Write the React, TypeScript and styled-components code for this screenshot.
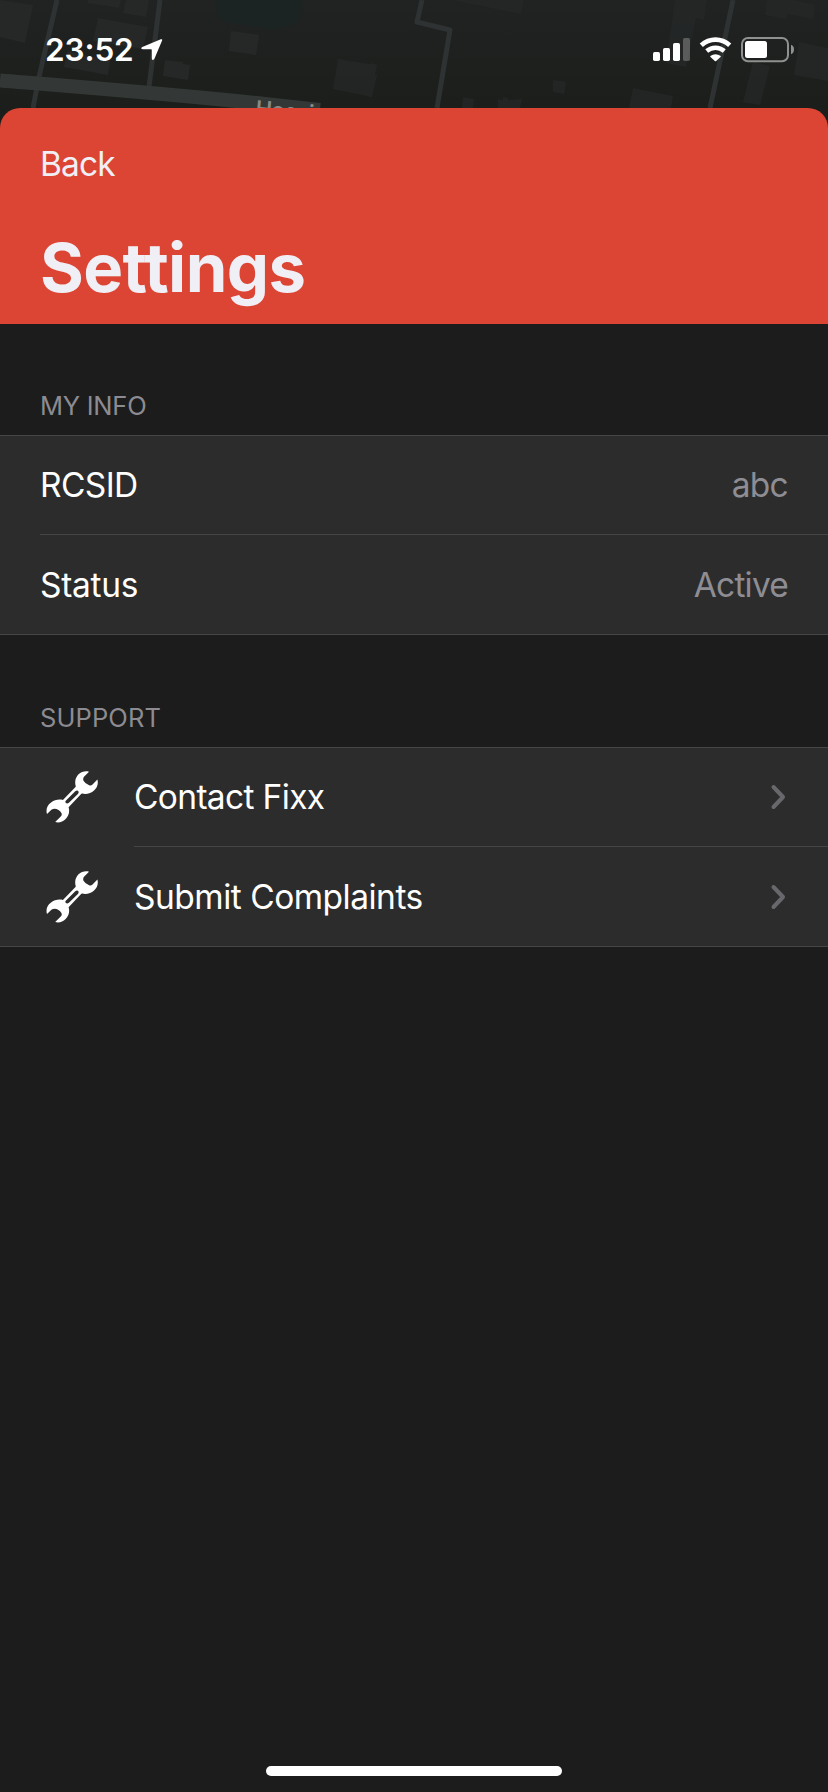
import React from "react";
import styled, { createGlobalStyle } from "styled-components";

const GlobalStyle = createGlobalStyle`
  * { box-sizing: border-box; }
  body {
    margin: 0;
    background: #1c1c1c;
    font-family: Inter, "Liberation Sans", sans-serif;
    color: #fff;
  }
`;

const Screen = styled.div`
  display: flex;
  flex-direction: column;
  width: 828px;
  height: 1792px;
  overflow: hidden;
  background: #1c1c1c;
`;

const StatusBar = styled.header`
  position: relative;
  display: flex;
  justify-content: space-between;
  height: 108px;
  padding: 37px 34px 0 45px;
  background: linear-gradient(#212323, #1b1e1a);
`;

const MapBackdrop = styled.svg`
  position: absolute;
  top: 0;
  left: 0;
`;

const StatusGroup = styled.div`
  position: relative;
  display: flex;
  align-items: flex-start;
  height: 26px;
`;

const Time = styled.span`
  width: 96px;
  font-size: 31.5px;
  font-weight: 600;
  line-height: 25px;
  letter-spacing: -0.1px;
  white-space: nowrap;
`;

const Sheet = styled.main`
  display: flex;
  flex: 1;
  flex-direction: column;
  background: #1c1c1c;
`;

const NavBar = styled.div`
  display: flex;
  flex-direction: column;
  height: 216px;
  padding: 36px 40px 0;
  border-radius: 20px 20px 0 0;
  background: #dc4433;
  color: #f0eff5;
`;

const SheetTop = styled.div`
  background: #1b1e1a;
`;

const BackButton = styled.button`
  align-self: flex-start;
  padding: 0;
  border: 0;
  background: none;
  color: inherit;
  font: 400 33.5px/41px Inter, "Liberation Sans", sans-serif;
  letter-spacing: -0.9px;
`;

const Title = styled.h1`
  margin: 43px 0 0;
  font-size: 67px;
  font-weight: 700;
  line-height: 80px;
  letter-spacing: -0.6px;
`;

const SectionLabel = styled.h2<{ $top: number; $spacing: number }>`
  margin: 0;
  padding: ${(p) => p.$top}px 40px 13px;
  color: #8c8b91;
  font-size: 25.5px;
  font-weight: 400;
  line-height: 32px;
  letter-spacing: ${(p) => p.$spacing}px;
`;

const List = styled.div`
  height: 200px;
  border-top: 1px solid #464648;
  border-bottom: 1px solid #464648;
  background: #2c2c2c;
`;

const Row = styled.div<{ $divider?: boolean }>`
  display: flex;
  align-items: stretch;
  height: ${(p) => (p.$divider ? 99 : 100)}px;
  padding-left: 40px;
`;

const IconSlot = styled.div<{ $divider?: boolean }>`
  display: flex;
  align-items: center;
  width: 94px;
  padding: 0 0 ${(p) => (p.$divider ? 1 : 0)}px 6px;
`;

const RowBody = styled.div<{ $divider?: boolean }>`
  display: flex;
  flex: 1;
  align-items: center;
  justify-content: space-between;
  padding-right: 40px;
  border-bottom: ${(p) => (p.$divider ? "1px solid #454547" : "0")};
  font-size: 33.5px;
`;

const Label = styled.span<{ $spacing: number }>`
  letter-spacing: ${(p) => p.$spacing}px;
`;

const Value = styled(Label)`
  color: #8e8d93;
`;

const Chevron = styled.svg`
  margin-right: 2px;
`;

const HomeArea = styled.div`
  display: flex;
  justify-content: center;
  margin-top: auto;
  padding-bottom: 16px;
`;

const HomeIndicator = styled.div`
  width: 296px;
  height: 10px;
  border-radius: 5px;
  background: #fff;
`;

const MapArt = () => (
  <MapBackdrop width="828" height="108" viewBox="0 0 828 108">
    <path d="M216 0h86l-3 21q-12 9-30 8l-44-7q-9-4-9-22z" fill="#1c2423" />
    <g fill="#262828">
      <path d="M0 0l33 5-8 38-25-6zM88 0h33l-2 8-31-5zM126 0h23l-3 17-23-4zM98 18l50 9-5 22-50-8zM68 51l42 10-2 14-44-8zM231 31l28 4-3 20-27-4zM165 60l18 2v2l7 1-2 15-25-4z" />
      <path d="M452 0h72l-3 14zM338 59l31 5 3-1 5 2-2 10h2l-5 22-39-8zM675 0h32l-3 20-8-2-10 49-20-4zM767 0h27l21 5-2 14-25-5-2 5-21-4zM799 42l29 6v33l-34-6zM753 62l17 4-10 39-17-3zM553 80l13 2-2 12-11-2zM633 88l40 8-2 12h-42zM463 97l11 2-1 9h-11zM498 99l5 1v-3l5 1v2l14-1-2 9h-22z" opacity=".72" />
    </g>
    <g fill="none" stroke="#2e3232" strokeWidth="5">
      <path d="M57 0L39 77 33 108M160 0L149 87M422 0l-5 22 33 8-13 78M733 0L710 108" strokeLinejoin="round" />
    </g>
    <path d="M0 80.500C80 87 170 94 265 104l55 6" fill="none" stroke="#333735" strokeWidth="14" />
    <text x="255" y="116" fill="#858987" fontFamily="Inter, sans-serif" fontSize="22" fontWeight="600" letterSpacing="-0.6" transform="rotate(5 255 116)">Hoosi</text>
  </MapBackdrop>
);

const LocationArrow = () => (
  <svg width="22" height="23" viewBox="0 0 22 23">
    <path d="M19.800 2.300Q22 1.700 20.900 4L13.400 21.700Q11.500 24.500 10.800 21.500V12.800Q10.700 12.300 10.200 12.300H1.700Q-1.200 11.600 1.300 10.100Z" fill="#fff" />
  </svg>
);

const SignalIcons = () => (
  <svg width="142" height="26" viewBox="652 37 142 26">
    <g fill="#fff">
      <rect x="653" y="52" width="7" height="9" rx="1.700" />
      <rect x="663" y="48" width="7" height="13" rx="1.700" />
      <rect x="673" y="43" width="7" height="18" rx="1.700" />
      <rect x="683" y="38" width="7" height="23" rx="1.700" opacity=".25" />
      <path d="M710.300 55.900Q715.500 52.400 720.700 55.900Q721 56.400 720.500 56.900L716.200 61Q715.500 61.500 714.800 61L710.500 56.900Q710 56.400 710.300 55.900Z" />
      <rect x="745" y="41" width="22" height="17" rx="2.500" />
      <path d="M791 44.800q3 1.200 3 4.700t-3 4.700z" opacity=".5" />
    </g>
    <g fill="none" stroke="#fff">
      <path d="M701.300 45.200Q707.500 39.600 715.500 39.600T729.700 45.200" strokeWidth="4.700" />
      <path d="M706.700 51Q710.600 47.700 715.500 47.700T724.300 51" strokeWidth="4.500" />
      <rect x="742" y="38" width="46" height="23.300" rx="6" strokeWidth="2" opacity=".5" />
    </g>
  </svg>
);

const Wrench = () => (
  <svg width="52" height="52" viewBox="0 0 52 52">
    <path
      fillRule="evenodd"
      fill="#fff"
      d="M43 .7C35.500-1.500 27 5.500 29.700 14.900Q29.900 15.700 29 16.500L16.900 29C9.500 26.700-2 33.200 1 43.100L5.700 38.600C8.500 36.500 13.500 38.200 15.400 42C16.100 43.700 15.700 44.500 14.500 45.700L9.200 51C16.500 53.500 25.500 45.500 22.600 36.200L34.900 23.200Q35.400 22.500 36.200 22.600C45.500 24.500 53.800 17 51.400 8.600L46.300 13.700Q45 15 43.100 14.200Q39.300 13 37.500 9.800Q36.700 7.500 38 5.800ZM32.500 20.500Q33 21.900 31.900 23L22.900 31.800Q21 33 19.700 31.800Q18.800 30.600 20 29.400L29 20.600Q31.300 18.700 32.500 20.500Z"
    />
  </svg>
);

const Disclosure = () => (
  <Chevron width="16" height="26" viewBox="0 0 16 26">
    <path d="M3.500 3l9.500 10L3.500 23" fill="none" stroke="#68686c" strokeWidth="4" strokeLinecap="round" strokeLinejoin="round" />
  </Chevron>
);

const info = [
  { label: "RCSID", value: "abc", spacing: -0.6, valueSpacing: -0.7 },
  { label: "Status", value: "Active", spacing: -0.3, valueSpacing: -0.8 },
];

const support = [
  { label: "Contact Fixx", spacing: -0.65 },
  { label: "Submit Complaints", spacing: -0.5 },
];

export default function App() {
  return (
    <Screen>
      <GlobalStyle />
      <StatusBar>
        <MapArt />
        <StatusGroup>
          <Time>23:52</Time>
          <LocationArrow />
        </StatusGroup>
        <StatusGroup>
          <SignalIcons />
        </StatusGroup>
      </StatusBar>
      <Sheet>
        <SheetTop>
          <NavBar>
            <BackButton>Back</BackButton>
            <Title>Settings</Title>
          </NavBar>
        </SheetTop>
        <SectionLabel $top={66} $spacing={-0.25}>MY INFO</SectionLabel>
        <List>
          {info.map((item, i) => (
            <Row key={item.label} $divider={i === 0}>
              <RowBody $divider={i === 0}>
                <Label $spacing={item.spacing}>{item.label}</Label>
                <Value $spacing={item.valueSpacing}>{item.value}</Value>
              </RowBody>
            </Row>
          ))}
        </List>
        <SectionLabel $top={67} $spacing={0.1}>SUPPORT</SectionLabel>
        <List>
          {support.map((item, i) => (
            <Row key={item.label} $divider={i === 0}>
              <IconSlot $divider={i === 0}>
                <Wrench />
              </IconSlot>
              <RowBody $divider={i === 0}>
                <Label $spacing={item.spacing}>{item.label}</Label>
                <Disclosure />
              </RowBody>
            </Row>
          ))}
        </List>
        <HomeArea>
          <HomeIndicator />
        </HomeArea>
      </Sheet>
    </Screen>
  );
}
